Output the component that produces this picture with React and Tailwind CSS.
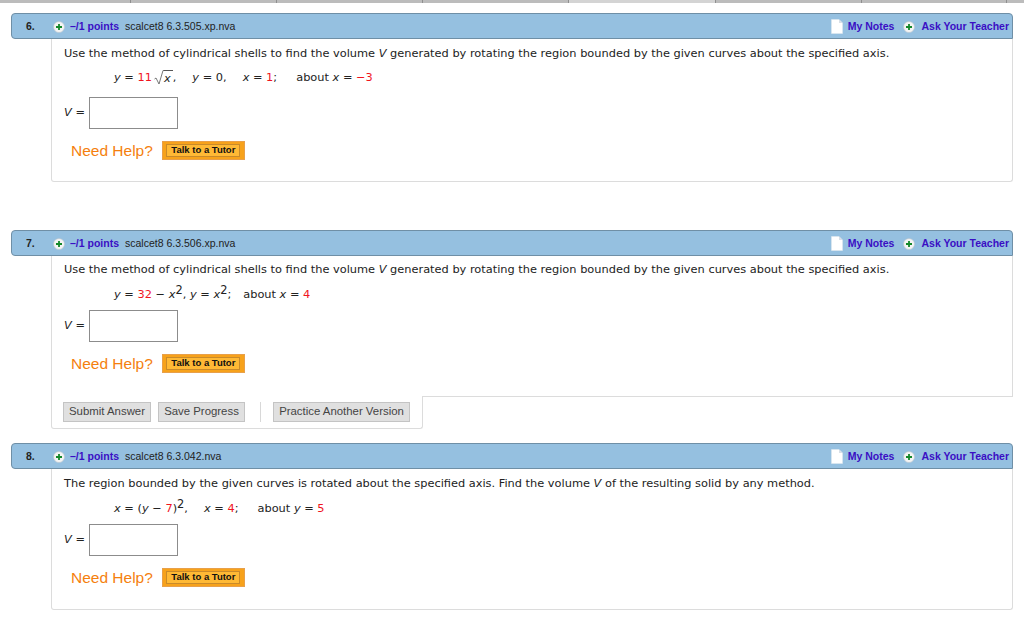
const serif = "font-['DejaVu_Sans',sans-serif]"

function PlusIcon() {
  return (
    <svg width="12" height="12" viewBox="0 0 12 12" className="shrink-0">
      <circle cx="6" cy="6" r="5.5" fill="#f4f4f4" stroke="#b9c4cc" strokeWidth="0.6" />
      <path d="M6 3v6M3 6h6" stroke="#14882a" strokeWidth="1.8" />
    </svg>
  )
}

function NoteIcon() {
  return (
    <svg width="12" height="15" viewBox="0 0 12 15" className="shrink-0">
      <path d="M0.5 0.5h7.5l3.5 3.5v10.5H0.5z" fill="#ffffff" stroke="#dfe7ee" strokeWidth="0.6" />
      <path d="M8 0.5l3.5 3.5H8z" fill="#d8dfe6" />
    </svg>
  )
}

function QuestionHeader({ number, code }) {
  return (
    <div className="flex h-[26px] items-center rounded-t-[4px] rounded-bl-[4px] border border-[#6f8fa6] bg-[#95c0e0] pt-[1px] font-['Liberation_Sans',sans-serif] text-[10.5px]">
      <span className="ml-[14px] w-[27px] font-bold text-[#222]">{number}.</span>
      <PlusIcon />
      <span className="ml-[5px] font-bold text-[#3a0fc4]">–/1 points</span>
      <span className="ml-[6px] text-[#222]">{code}</span>
      <span className="ml-auto flex items-center gap-[5px] font-bold text-[#3a0fc4]">
        <NoteIcon />
        My Notes
      </span>
      <span className="ml-[9px] mr-[3px] flex items-center gap-[6px] font-bold text-[#3a0fc4]">
        <PlusIcon />
        Ask Your Teacher
      </span>
    </div>
  )
}

function Red({ children }) {
  return <span className="text-[#f0141e]">{children}</span>
}

function V({ children }) {
  return <i>{children}</i>
}

function Gap() {
  return <span className="inline-block w-[16px]" />
}

function WideGap() {
  return <span className="inline-block w-[19px]" />
}

function Squared() {
  return <sup className="-top-[4px] text-[11.4px] leading-none">2</sup>
}

// spacing differs a little from question to question, so the classes come in as props
function AnswerBlock({ prompt, math, promptClass, mathClass, boxClass }) {
  return (
    <div className={`${serif} pl-[12px] text-[11.37px] text-[#222]`}>
      <p className={`${promptClass} leading-[14px]`}>{prompt}</p>
      <div className={`${mathClass} ml-[50px] h-[16px] whitespace-pre leading-[16px]`}>{math}</div>
      <div className={`${boxClass} flex items-center`}>
        <span className="w-[25px]"><V>V</V> =</span>
        <div className="h-[32px] w-[89px] border border-[#8c8c8c] bg-white" />
      </div>
      <div className="ml-[7px] mt-[12px] flex items-center gap-[9px] font-['Liberation_Sans',sans-serif]">
        <span className="text-[15.5px] leading-[18px] text-[#f57f0e]">Need Help?</span>
        <span className="flex h-[19px] w-[83px] items-center justify-center bg-[#f7a21b] shadow-[inset_0_0_0_1px_#e8a04a]">
          <span className="flex h-[13px] w-[74px] items-center justify-center border border-[#c98a2a] bg-[#ffb935] text-[9.5px] font-bold text-[#111]">
            Talk to a Tutor
          </span>
        </span>
      </div>
    </div>
  )
}

function Sqrt({ children }) {
  return (
    <span className="inline-flex items-end align-bottom">
      <svg width="10" height="15" viewBox="0 0 10 15" className="ml-[2px] shrink-0">
        <path d="M0.5 9l1.5-1 3 6L9 0.5h1" fill="none" stroke="#555" strokeWidth="0.8" />
      </svg>
      <span className="border-t border-[#555] pr-[2px] leading-[14px]">{children}</span>
    </span>
  )
}

function GrayButton({ children, className }) {
  return (
    <span className={`flex h-[20px] items-center justify-center border border-[#c4c4c4] bg-[#e0e0e0] text-[11.4px] text-[#444] ${className}`}>
      {children}
    </span>
  )
}

export default function App() {
  return (
    <div className="h-[619px] w-[1024px] overflow-hidden bg-white">
      <div className="flex h-[3px] bg-[#bcbcbc]">
        <div className="w-[131px] border-r border-[#8f8f8f]" />
        <div className="w-[146px] border-r border-[#8f8f8f]" />
        <div className="w-[146px] border-r border-[#8f8f8f]" />
        <div className="w-[146px] border-r border-[#8f8f8f]" />
        <div className="w-[147px] border-r border-[#8f8f8f] bg-[#d4d4d4]" />
        <div className="w-[146px] border-r border-[#8f8f8f]" />
        <div className="w-[145px] border-r border-[#8f8f8f]" />
      </div>

      <div className="ml-[11px] mr-[11px] mt-[10px]">
        <QuestionHeader number="6" code="scalcet8 6.3.505.xp.nva" />
        <div className="ml-[40px] h-[143px] rounded-b-[3px] border-x border-b border-[#dcdcdc]">
          <AnswerBlock
            promptClass="pt-[7px]"
            mathClass="mt-[9px]"
            boxClass="mt-[12px]"
            prompt={<>Use the method of cylindrical shells to find the volume <V>V</V> generated by rotating the region bounded by the given curves about the specified axis.</>}
            math={<><V>y</V> = <Red>11</Red><Sqrt><V>x</V></Sqrt>,<Gap /><V>y</V> = 0,<Gap /><V>x</V> = <Red>1</Red>;<WideGap />about <V>x</V> = <Red>−3</Red></>}
          />
        </div>

        <div className="mt-[48px]">
          <QuestionHeader number="7" code="scalcet8 6.3.506.xp.nva" />
        </div>
        <div className="ml-[40px] h-[140px] border-x border-[#dcdcdc]">
          <AnswerBlock
            promptClass="pt-[6px]"
            mathClass="mt-[10px]"
            boxClass="mt-[8px]"
            prompt={<>Use the method of cylindrical shells to find the volume <V>V</V> generated by rotating the region bounded by the given curves about the specified axis.</>}
            math={<><V>y</V> = <Red>32</Red> − <V>x</V><Squared />, <V>y</V> = <V>x</V><Squared />;<span className="inline-block w-[12px]" />about <V>x</V> = <Red>4</Red></>}
          />
        </div>
        <div className="ml-[40px] flex items-start">
          <div className="flex h-[33px] w-[372px] items-start gap-[7px] rounded-b-[3px] border-x border-b border-[#dcdcdc] pl-[11px] pt-[6px] font-['Liberation_Sans',sans-serif]">
            <GrayButton className="w-[88px]">Submit Answer</GrayButton>
            <GrayButton className="w-[87px]">Save Progress</GrayButton>
            <span className="ml-[8px] mr-[5px] h-[20px] w-px bg-[#d8d8d8]" />
            <GrayButton className="w-[137px]">Practice Another Version</GrayButton>
          </div>
          <div className="h-px flex-1 bg-[#dcdcdc]" />
        </div>

        <div className="mt-[14px]">
          <QuestionHeader number="8" code="scalcet8 6.3.042.nva" />
        </div>
        <div className="ml-[40px] h-[141px] rounded-b-[3px] border-x border-b border-[#dcdcdc]">
          <AnswerBlock
            promptClass="pt-[7px]"
            mathClass="mt-[10px]"
            boxClass="mt-[8px]"
            prompt={<>The region bounded by the given curves is rotated about the specified axis. Find the volume <V>V</V> of the resulting solid by any method.</>}
            math={<><V>x</V> = (<V>y</V> − <Red>7</Red>)<Squared />,<Gap /><V>x</V> = <Red>4</Red>;<WideGap />about <V>y</V> = <Red>5</Red></>}
          />
        </div>
      </div>
    </div>
  )
}
